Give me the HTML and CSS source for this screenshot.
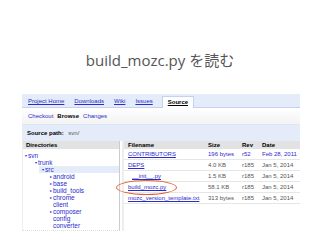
FILE: index.html
```html
<!DOCTYPE html>
<html lang="ja">
<head>
  <meta charset="UTF-8" />
  <meta name="viewport" content="width=device-width, initial-scale=1.0" />
  <title>build_mozc.py を読む</title>
  <link rel="stylesheet" href="styles.css">
</head>
<body>
  <div class="slide">
    <h1 class="title">build_mozc.py を読む</h1>

    <div class="project">
      <div class="tabs">
        <a class="tab">Project Home</a>
        <a class="tab">Downloads</a>
        <a class="tab">Wiki</a>
        <a class="tab last">Issues</a>
        <span class="tab active">Source</span>
      </div>
      <div class="subnav">
        <a>Checkout</a>
        <b>Browse</b>
        <a>Changes</a>
      </div>
      <div class="pathbar"><b>Source path:</b> <a>svn/</a></div>

      <div class="browser">
        <div class="dirs">
          <div class="head">Directories</div>
          <div class="tree">
            <div class="node lv0 open">svn</div>
            <div class="node lv1 open">trunk</div>
            <div class="node lv2 open selected">src</div>
            <div class="node lv3 closed">android</div>
            <div class="node lv3 closed">base</div>
            <div class="node lv3 closed">build_tools</div>
            <div class="node lv3 closed">chrome</div>
            <div class="node lv3">client</div>
            <div class="node lv3 closed">composer</div>
            <div class="node lv3">config</div>
            <div class="node lv3">converter</div>
          </div>
        </div>

        <div class="files">
          <div class="row head">
            <span>Filename</span><span>Size</span><span>Rev</span><span>Date</span>
          </div>
          <div class="row">
            <a>CONTRIBUTORS</a><span>196 bytes</span><span>r52</span><span>Feb 28, 2011</span>
          </div>
          <div class="row">
            <a>DEPS</a><span>4.0 KB</span><span>r185</span><span>Jan 5, 2014</span>
          </div>
          <div class="row">
            <a class="init">__init__.py</a><span>1.5 KB</span><span>r185</span><span>Jan 5, 2014</span>
          </div>
          <div class="row marked">
            <a>build_mozc.py</a><span>58.1 KB</span><span>r185</span><span>Jan 5, 2014</span>
            <i class="circle"></i>
          </div>
          <div class="row">
            <a>mozc_version_template.txt</a><span>313 bytes</span><span>r185</span><span>Jan 5, 2014</span>
          </div>
        </div>
      </div>
    </div>
  </div>
</body>
</html>
```

FILE: styles.css
```css
body {
  margin: 0;
  padding: 0;
  background: #fff;
}

.slide {
  width: 320px;
  height: 240px;
  overflow: hidden;
  background: #fff;
}

.title {
  margin: 0;
  padding-top: 50px;
  height: 44px;
  text-align: center;
  font-family: "Open Sans", "Noto Sans CJK JP", sans-serif;
  font-weight: normal;
  font-size: 15px;
  line-height: 20px;
  color: #555;
}

.project {
  margin-left: 22px;
  width: 278px;
  font-family: "Liberation Sans", Arial, sans-serif;
  font-size: 6px;
  color: #000;
}

.project a {
  color: #2b2bcc;
}

/* tab strip */
.tabs {
  display: flex;
  align-items: flex-end;
  height: 14px;
  padding-left: 6px;
  background: #e5ecf9;
  border-bottom: 1px solid #c3d3ef;
  box-sizing: border-box;
}

.tab {
  margin-right: 10px;
  padding-bottom: 3px;
  text-decoration: underline;
}

.tab.last {
  margin-right: 9px;
}

.tab.active {
  padding: 2px 5px 3px;
  background: #fff;
  border: 1px solid #c3d3ef;
  border-bottom: none;
  font-weight: bold;
  position: relative;
  top: 1px;
}

.subnav {
  display: flex;
  gap: 4px;
  align-items: center;
  height: 17px;
  padding-left: 6px;
  background: linear-gradient(#fff, #f3f3f3);
  border-bottom: 1px solid #dde6f5;
  box-sizing: border-box;
}

.subnav a {
  text-decoration: none;
}

.pathbar {
  height: 16px;
  line-height: 16px;
  padding-left: 5px;
  background: #e5ecf9;
}

.pathbar a {
  margin-left: 3px;
  text-decoration: none;
  color: #555;
}

/* directory tree + file list */
.browser {
  display: flex;
  height: 90px;
}

.dirs {
  width: 98px;
  border-left: 1px solid #eee;
  border-right: 1px solid #ccc;
  border-bottom: 1px dotted #ddd;
  box-sizing: border-box;
}

.head {
  height: 8px;
  line-height: 8px;
  padding-left: 3px;
  background: #e2e2e2;
  font-weight: bold;
}

.tree {
  padding-top: 3px;
  font-size: 6.5px;
}

.node {
  height: 7px;
  line-height: 7px;
  color: #2b2bcc;
  white-space: nowrap;
}

.node::before {
  content: "";
  display: inline-block;
  width: 3px;
}

.node.open::before {
  content: "\25BE";
  font-size: 4px;
  vertical-align: 1px;
}

.node.closed::before {
  content: "\25B8";
  font-size: 4px;
  vertical-align: 1px;
}

.lv0 { padding-left: 2px; }
.lv1 { padding-left: 12px; }
.lv2 { padding-left: 19px; }
.lv3 { padding-left: 27px; }

.node.selected {
  margin-left: 16px;
  padding-left: 3px;
  background: #e5ecf9;
}

.files {
  flex: 1;
  margin-left: 2px;
  border-left: 2px solid #eee;
}

.row {
  display: grid;
  grid-template-columns: 80px 34px 20px 1fr;
  height: 11px;
  align-items: center;
  padding-left: 4px;
  border-bottom: 1px solid #e6e6e6;
  box-sizing: border-box;
  position: relative;
  color: #555;
}

.row.head {
  height: 8px;
  padding-left: 4px;
  background: #e2e2e2;
  border-bottom: none;
  color: #000;
}

.row:nth-child(2) span {
  color: #2b2bcc;
}

.row a {
  text-decoration: underline;
}

.row a.init {
  padding-left: 4px;
}

.circle {
  position: absolute;
  left: -8px;
  top: -2px;
  width: 59px;
  height: 13px;
  border: 1.5px solid #e0612d;
  border-radius: 50%;
}
```
